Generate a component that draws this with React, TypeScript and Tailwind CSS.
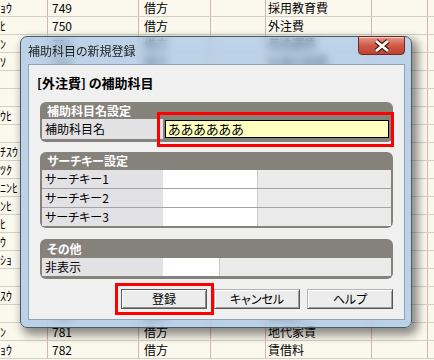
import React from "react";

const rows: string[][] = [
  ["ｮｳ", "749", "借方", "", "採用教育費"],
  ["ﾋ", "750", "借方", "", "外注費"],
  ["ﾝ", "751", "借方", "", "荷造運賃"],
  ["ｿ", "752", "借方", "", "水道光熱費"],
  ["", "753", "借方", "", "旅費交通費"],
  ["", "754", "借方", "", "通信費"],
  ["ｳﾋ", "755", "借方", "", "広告宣伝費"],
  ["", "756", "借方", "", "接待交際費"],
  ["ﾁｽｳ", "757", "借方", "", "会議費"],
  ["ﾂｸ", "758", "借方", "", "消耗品費"],
  ["ﾆﾝﾋ", "759", "借方", "", "修繕費"],
  ["ﾝﾋ", "760", "借方", "", "事務用品費"],
  ["ﾋ", "761", "借方", "", "福利厚生費"],
  ["ｳ", "762", "借方", "", "新聞図書費"],
  ["ｼｮ", "763", "借方", "", "諸会費"],
  ["", "764", "借方", "", "支払手数料"],
  ["ｽｳ", "765", "借方", "", "車両費"],
  ["", "766", "借方", "", "保険料"],
  ["ﾝ", "781", "借方", "", "地代家賃"],
  ["ｮｳ", "782", "借方", "", "賃借料"],
];

const cellBase =
  "shrink-0 h-full border-r border-[#d8b4ab] overflow-hidden whitespace-nowrap leading-[17px]";

function GridRow({ r, first }: { r: string[]; first: boolean }) {
  return (
    <div
      className={
        "flex h-[18px] border-b border-[#d3d0c6] text-[12px] text-black " +
        (first ? "-mt-[1px]" : "")
      }
    >
      <div className={cellBase + " w-[48px]"}>{r[0]}</div>
      <div className={cellBase + " w-[91px] pl-[4px]"}>{r[1]}</div>
      <div className={cellBase + " w-[72px] pl-[5px]"}>{r[2]}</div>
      <div className={cellBase + " w-[55px]"}>{r[3]}</div>
      <div className={cellBase + " w-[106px] pl-[2px]"}>{r[4]}</div>
      <div className={cellBase + " w-[56px]"}></div>
      <div className="flex-1"></div>
    </div>
  );
}

function PanelHeader({ text, h }: { text: string; h: string }) {
  return (
    <div
      className={
        h +
        " flex items-center pl-[5px] text-[12px] font-bold text-white"
      }
    >
      {text}
    </div>
  );
}

function KeyRow({ label, whiteW }: { label: string; whiteW: string }) {
  return (
    <div className="flex h-[18px]">
      <div className="w-[121px] bg-[#e2e2e4] pl-[3px] text-[12px] leading-[18px] text-black">
        {label}
      </div>
      <div className={whiteW + " bg-white"}></div>
      <div className="flex-1 border-l border-[#c9c9c9] bg-[#ebebeb]"></div>
    </div>
  );
}

function Btn({ text, def }: { text: string; def?: boolean }) {
  return (
    <div
      className={
        "w-[86px] h-[20px] flex items-center justify-center text-[12px] text-black bg-[#ececec] border " +
        (def
          ? "border-[#5a5a5a] shadow-[inset_1px_1px_0_#ffffff,inset_-1px_-1px_0_#8a8a8a]"
          : "border-t-[#b4b4b4] border-l-[#b4b4b4] border-r-[#555555] border-b-[#555555] shadow-[inset_1px_1px_0_#ffffff,inset_-1px_-1px_0_#a0a0a0]")
      }
    >
      {text}
    </div>
  );
}

export default function App() {
  return (
    <div
      className="relative w-[434px] h-[360px] overflow-hidden bg-[#fbf8ee] [font-feature-settings:'palt']"
      style={{ fontFamily: '"Noto Sans CJK JP", "Noto Sans", sans-serif' }}
    >
      <div className="flex flex-col">
        {rows.map((r, i) => (
          <GridRow key={i} r={r} first={i === 0} />
        ))}
      </div>

      {/* dialog */}
      <div className="absolute left-[20px] top-[36px] w-[392px] h-[292px] rounded-[7px] border border-[#4d5a68] bg-[#8ab4e4]/55 backdrop-blur-[4px] shadow-[4px_5px_10px_2px_rgba(0,0,0,0.45)] flex flex-col">
        <div className="relative h-[27px] shrink-0 flex items-center pl-[7px] pt-[1px] text-[12px] text-[#1f1f1f]">
          補助科目の新規登録
          <div className="absolute right-[6px] -top-[1px] w-[47px] h-[19px] rounded-b-[4px] border border-[#6e2a22] bg-gradient-to-b from-[#e59a8c] via-[#cf5a48] to-[#c0412f] shadow-[inset_0_1px_0_rgba(255,255,255,0.5)] flex items-center justify-center">
            <svg width="20" height="14" viewBox="0 0 20 14">
              <path d="M4 2 L16 12 M16 2 L4 12" stroke="#4a1d17" strokeWidth="5" />
              <path d="M4 2 L16 12 M16 2 L4 12" stroke="#ffffff" strokeWidth="2.6" />
            </svg>
          </div>
        </div>

        <div className="flex-1 ml-[7px] mr-[6px] mb-[7px] border border-[#8fa4ba] bg-[#f0f0f0] flex flex-col px-[11px]">
          <div className="mt-[10px] h-[16px] -ml-[3px] text-[13px] font-bold leading-[16px] text-black">
            [外注費] の補助科目
          </div>

          {/* panel 1 */}
          <div className="mt-[11px] rounded-[6px] bg-[#84827b] px-[2px] pb-[3px]">
            <PanelHeader text="補助科目名設定" h="h-[17px]" />
            <div className="flex h-[20px]">
              <div className="w-[121px] bg-[#e2e2e4] pl-[3px] text-[12px] leading-[20px] text-black">
                補助科目名
              </div>
              <div className="flex-1 ml-[2px] mr-[2px] my-[1px] border border-black bg-[#ffffc0] pl-[2px] text-[13px] leading-[16px] text-black">
                ああああああ
              </div>
            </div>
          </div>

          {/* panel 2 */}
          <div className="mt-[10px] rounded-[6px] bg-[#84827b] px-[2px] pb-[2px]">
            <PanelHeader text="サーチキー設定" h="h-[18px]" />
            <div className="flex flex-col gap-[1px] bg-[#a4a4a4]">
              <KeyRow label="サーチキー1" whiteW="w-[94px]" />
              <KeyRow label="サーチキー2" whiteW="w-[94px]" />
              <KeyRow label="サーチキー3" whiteW="w-[94px]" />
            </div>
          </div>

          {/* panel 3 */}
          <div className="mt-[11px] rounded-[6px] bg-[#84827b] px-[2px] pb-[3px]">
            <PanelHeader text="その他" h="h-[19px]" />
            <KeyRow label="非表示" whiteW="w-[56px]" />
          </div>

          <div className="mt-[10px] flex justify-end gap-[7px]">
            <Btn text="登録" def />
            <Btn text="キャンセル" />
            <Btn text="ヘルプ" />
          </div>
        </div>
      </div>

      {/* red annotation boxes */}
      <div className="absolute left-[157px] top-[112px] w-[237px] h-[35px] border-[3px] border-[#ff0000]"></div>
      <div className="absolute left-[115px] top-[283px] w-[99px] h-[32px] border-[3px] border-[#ff0000]"></div>
    </div>
  );
}
